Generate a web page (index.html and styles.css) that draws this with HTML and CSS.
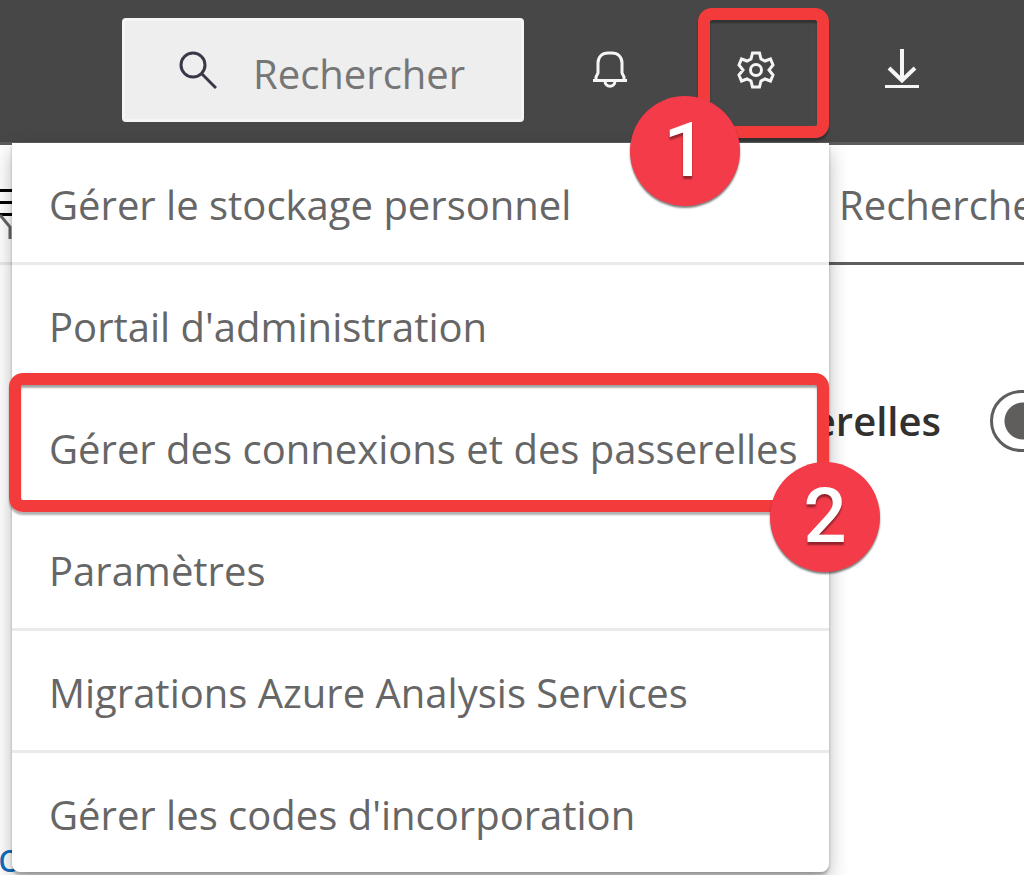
FILE: index.html
```html
<!DOCTYPE html>
<html lang="fr">
<head>
<meta charset="utf-8">
<title>Paramètres</title>
<link rel="stylesheet" href="styles.css">
</head>
<body>
<header class="topbar">
  <div class="search">
    <svg class="search-icon" viewBox="0 0 38 38" aria-hidden="true"><circle cx="14" cy="14" r="12"/><path d="M23 23L37 37"/></svg>
    <input class="search-input" type="search" placeholder="Rechercher" aria-label="Rechercher">
  </div>
  <nav class="actions">
    <button class="action" type="button" aria-label="Notifications">
      <svg class="icon" viewBox="0 0 38 38" aria-hidden="true"><path d="M2 29.500H36M5 29V26L7 22V12C7 6 11 2 17 2H21C27 2 31 6 31 12V22L33 26V29M14 30C14 37 24 37 24 30"/></svg>
    </button>
    <div class="settings">
      <button class="action" type="button" aria-label="Paramètres" aria-expanded="true">
        <svg class="icon" viewBox="0 0 38 38" aria-hidden="true"><path d="M15.500 2H22.500L24 8L28 10L33.500 8L36 14L32 19L36 24L33.500 30L28 28L24 30L22.500 36H15.500L14 30L10 28L4.500 30L2 24L6 19L2 14L4.500 8L10 10L14 8Z"/><circle cx="19" cy="19" r="5.500"/></svg>
      </button>
      <ul class="menu">
        <li class="menu-row"><button class="menu-item" type="button">Gérer le stockage personnel</button></li>
        <li class="menu-row"><button class="menu-item" type="button">Portail d'administration</button></li>
        <li class="menu-row"><button class="menu-item" type="button">Gérer des connexions et des passerelles</button>
          <span class="frame frame-row"></span><span class="badge badge-row">2</span></li>
        <li class="menu-row"><button class="menu-item" type="button">Paramètres</button></li>
        <li class="menu-row"><button class="menu-item" type="button">Migrations Azure Analysis Services</button></li>
        <li class="menu-row"><button class="menu-item" type="button">Gérer les codes d'incorporation</button></li>
      </ul>
      <span class="frame frame-gear"></span>
      <span class="badge badge-gear">1</span>
    </div>
    <button class="action" type="button" aria-label="Télécharger">
      <svg class="icon" viewBox="0 0 38 38" aria-hidden="true"><path d="M19 -2V29M6 17L19 29.500L32 17" stroke-width="4"/><path d="M2 35.500H36"/></svg>
    </button>
  </nav>
</header>
<main class="page">
  <div class="toolbar">
    <button class="filter" type="button" aria-label="Filtrer">
      <svg class="filter-icon" viewBox="0 0 24 52" aria-hidden="true"><path d="M0 3.500H24M0 15.500H24M0 27.500H24"/><path class="funnel" d="M0 28L10 40V52"/></svg>
    </button>
    <input class="filter-input" type="text" placeholder="Rechercher" aria-label="Rechercher dans la liste">
  </div>
  <div class="option">
    <label class="option-label" for="gateways">erelles</label>
    <input class="toggle" type="checkbox" role="switch" id="gateways">
  </div>
  <a class="link" href="#">c</a>
</main>
</body>
</html>
```
FILE: styles.css
```css
* { box-sizing: border-box; }

body {
  margin: 0;
  height: 100vh;
  display: flex;
  flex-direction: column;
  overflow: hidden;
  background: #fff;
  color: #666;
  font: 40px/56px "Open Sans", "Noto Sans", sans-serif;
}

button, input { font: inherit; color: inherit; border: 0; background: none; padding: 0; margin: 0; }

.topbar {
  display: flex;
  flex: none;
  gap: 13px;
  padding: 0 49px 0 122px;
  height: 145px;
  background: #474747;
  border-bottom: 3px solid #5c5c5c;
  position: relative;
  z-index: 1;
}

.search {
  flex: 1;
  min-width: 0;
  height: 104px;
  margin-top: 18px;
  padding: 0 20px 0 54px;
  display: flex;
  align-items: center;
  gap: 36px;
  background: #eee;
  border: 3px solid #f5f5f5;
  border-radius: 4px;
}
.search-icon { width: 38px; height: 38px; flex: none; fill: none; stroke: #383848; stroke-width: 3; }
.search-input { flex: 1; min-width: 0; height: 60px; margin-top: 6px; color: #767676; outline: 0; }
.search-input::placeholder, .filter-input::placeholder { color: inherit; opacity: 1; }

.actions { display: flex; }
.action { width: 146px; height: 140px; display: flex; align-items: center; justify-content: center; }
.icon { width: 38px; height: 38px; fill: none; stroke: #f5f5f5; stroke-width: 3; overflow: visible; }
.settings { position: relative; }

.menu {
  position: absolute;
  top: 143px;
  right: 0;
  width: 817px;
  margin: 0;
  padding: 0;
  list-style: none;
  background: #fff;
  border-radius: 0 0 8px 8px;
  box-shadow: 0 3px 3px rgba(0, 0, 0, .25), 0 8px 20px rgba(0, 0, 0, .28);
}
.menu-row { position: relative; border-bottom: 3px solid #eaeaea; }
.menu-row:last-child { border-bottom: 0; }
.menu-item { display: block; width: 100%; padding: 34px 0 29px 37px; text-align: left; white-space: nowrap; }

.frame {
  position: absolute;
  border: 12px solid #f33b3b;
  border-radius: 14px;
  box-shadow: 0 3px 2px rgba(0, 0, 0, .3), inset 0 3px 2px rgba(0, 0, 0, .3);
  pointer-events: none;
}
.frame-gear { top: 8px; right: 0; width: 131px; height: 130px; }
.frame-row { inset: -14px 0 -6px -3px; z-index: 1; }

.badge {
  position: absolute;
  z-index: 2;
  width: 110px;
  height: 110px;
  border-radius: 50%;
  background: #f33b49;
  color: #fff;
  font: 500 76px/108px Roboto, sans-serif;
  text-align: center;
  text-shadow: 0 3px 2px rgba(0, 0, 0, .4);
  box-shadow: 0 2px 2px rgba(0, 0, 0, .5);
}
.badge-gear { top: 96px; right: 89px; }
.badge-row { bottom: -66px; right: -51px; }

.page { flex: 1; display: flex; flex-direction: column; min-height: 0; }
.toolbar { display: flex; height: 120px; flex: none; }
.filter { flex: 1; border-bottom: 3px solid #eaeaea; text-align: left; }
.filter-icon { display: block; width: 24px; height: 52px; fill: none; stroke: #000; stroke-width: 3; margin-top: 18px; }
.filter-icon .funnel { stroke: #666; }
.filter-input { flex: none; width: 195px; padding: 3px 0 0 10px; border-bottom: 3px solid #605e5c; outline: 0; }

.option { display: flex; justify-content: flex-end; align-items: center; gap: 49px; margin: 125px -86px 0 0; }
.option-label { font-weight: 600; color: #323130; }
.toggle {
  appearance: none;
  flex: none;
  width: 120px;
  height: 62px;
  border: 3px solid #605e5c;
  border-radius: 31px;
  background: radial-gradient(circle at 30px 50%, #605e5c 18px, transparent 19px);
}
.link { margin: auto 0 -10px -2px; color: #0f6cbd; text-decoration: none; }
```
